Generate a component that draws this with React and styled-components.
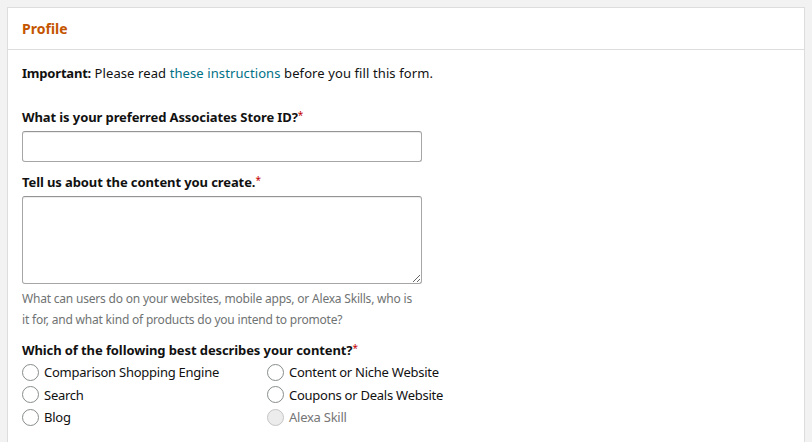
import React from 'react'
import styled, { createGlobalStyle } from 'styled-components'

const GlobalStyle = createGlobalStyle`
  html, body {
    margin: 0;
    padding: 0;
    background: #f2f2f2;
  }
  body {
    font-family: "Noto Sans", "Liberation Sans", sans-serif;
    color: #111;
  }
`

const Page = styled.div`
  padding: 7px;
  height: 428px;
  overflow: hidden;
`

const Card = styled.div`
  background: #fff;
  border: 1px solid #dddddd;
  min-height: 500px;
`

const Header = styled.div`
  height: 41px;
  display: flex;
  align-items: center;
  padding: 0 14px;
  border-bottom: 1px solid #dddddd;
`

const Title = styled.h2`
  margin: 0;
  font-size: 14px;
  font-weight: 700;
  color: #c45500;
`

const Body = styled.div`
  padding: 14px 14px 0;
  display: flex;
  flex-direction: column;
`

const Note = styled.p`
  margin: 0 0 25px;
  font-size: 13px;
  line-height: 19px;
  letter-spacing: 0.1px;

  strong {
    letter-spacing: -0.2px;
  }
`

const Link = styled.a`
  color: #007185;
  text-decoration: none;
`

const Label = styled.label`
  display: block;
  font-size: 13px;
  font-weight: 700;
  line-height: 19px;
  letter-spacing: -0.1px;
  margin-bottom: ${(p) => (p.tight ? 1 : 4)}px;
`

const Req = styled.span`
  color: #c40000;
  font-weight: 400;
  font-size: 10px;
  vertical-align: top;
  line-height: 14px;
`

const Field = styled.div`
  margin-bottom: ${(p) => p.gap || 11}px;
`

const Input = styled.input`
  display: block;
  box-sizing: border-box;
  width: 400px;
  height: 31px;
  border: 1px solid #a6a6a6;
  border-top-color: #949494;
  border-radius: 3px;
  box-shadow: 0 1px 0 rgba(255, 255, 255, 0.5), 0 1px 0 rgba(0, 0, 0, 0.07) inset;
  outline: none;
  padding: 0 7px;
  font: inherit;
`

const TextArea = styled.textarea`
  display: block;
  box-sizing: border-box;
  width: 400px;
  height: 88px;
  border: 1px solid #a6a6a6;
  border-top-color: #949494;
  border-radius: 3px;
  box-shadow: 0 1px 0 rgba(0, 0, 0, 0.07) inset;
  outline: none;
  padding: 6px 7px;
  font: inherit;
  resize: both;
  margin-bottom: 4px;
`

const Hint = styled.div`
  font-size: 12px;
  line-height: 21px;
  letter-spacing: -0.2px;
  color: #6f7373;
  width: 390px;
`

const Options = styled.div`
  display: grid;
  grid-template-columns: 245px 245px;
  grid-auto-rows: 22.5px;
`

const Option = styled.label`
  display: flex;
  align-items: center;
  gap: 5px;
  font-size: 13px;
  letter-spacing: -0.25px;
  color: ${(p) => (p.disabled ? '#767676' : '#111')};
`

const Radio = styled.span`
  box-sizing: border-box;
  width: 17px;
  height: 17px;
  border-radius: 50%;
  border: 1px solid ${(p) => (p.disabled ? '#c4c4c4' : '#888c8c')};
  background: ${(p) => (p.disabled ? '#ececec' : '#fff')};
  flex: none;
`

const options = [
  ['Comparison Shopping Engine', false],
  ['Content or Niche Website', false],
  ['Search', false],
  ['Coupons or Deals Website', false],
  ['Blog', false],
  ['Alexa Skill', true],
]

export default function App() {
  return (
    <Page>
      <GlobalStyle />
      <Card>
        <Header>
          <Title>Profile</Title>
        </Header>
        <Body>
          <Note>
            <strong>Important:</strong> Please read <Link href="#">these instructions</Link> before you fill this form.
          </Note>

          <Field gap={11}>
            <Label>What is your preferred Associates Store ID?<Req>*</Req></Label>
            <Input type="text" />
          </Field>

          <Field gap={11}>
            <Label>Tell us about the content you create.<Req>*</Req></Label>
            <TextArea />
            <Hint>
              What can users do on your websites, mobile apps, or Alexa Skills, who is it for, and what kind of products do you intend to promote?
            </Hint>
          </Field>

          <Field gap={0}>
            <Label tight>Which of the following best describes your content?<Req>*</Req></Label>
            <Options>
              {options.map(([text, disabled]) => (
                <Option key={text} disabled={disabled}>
                  <Radio disabled={disabled} />
                  {text}
                </Option>
              ))}
            </Options>
          </Field>
        </Body>
      </Card>
    </Page>
  )
}
